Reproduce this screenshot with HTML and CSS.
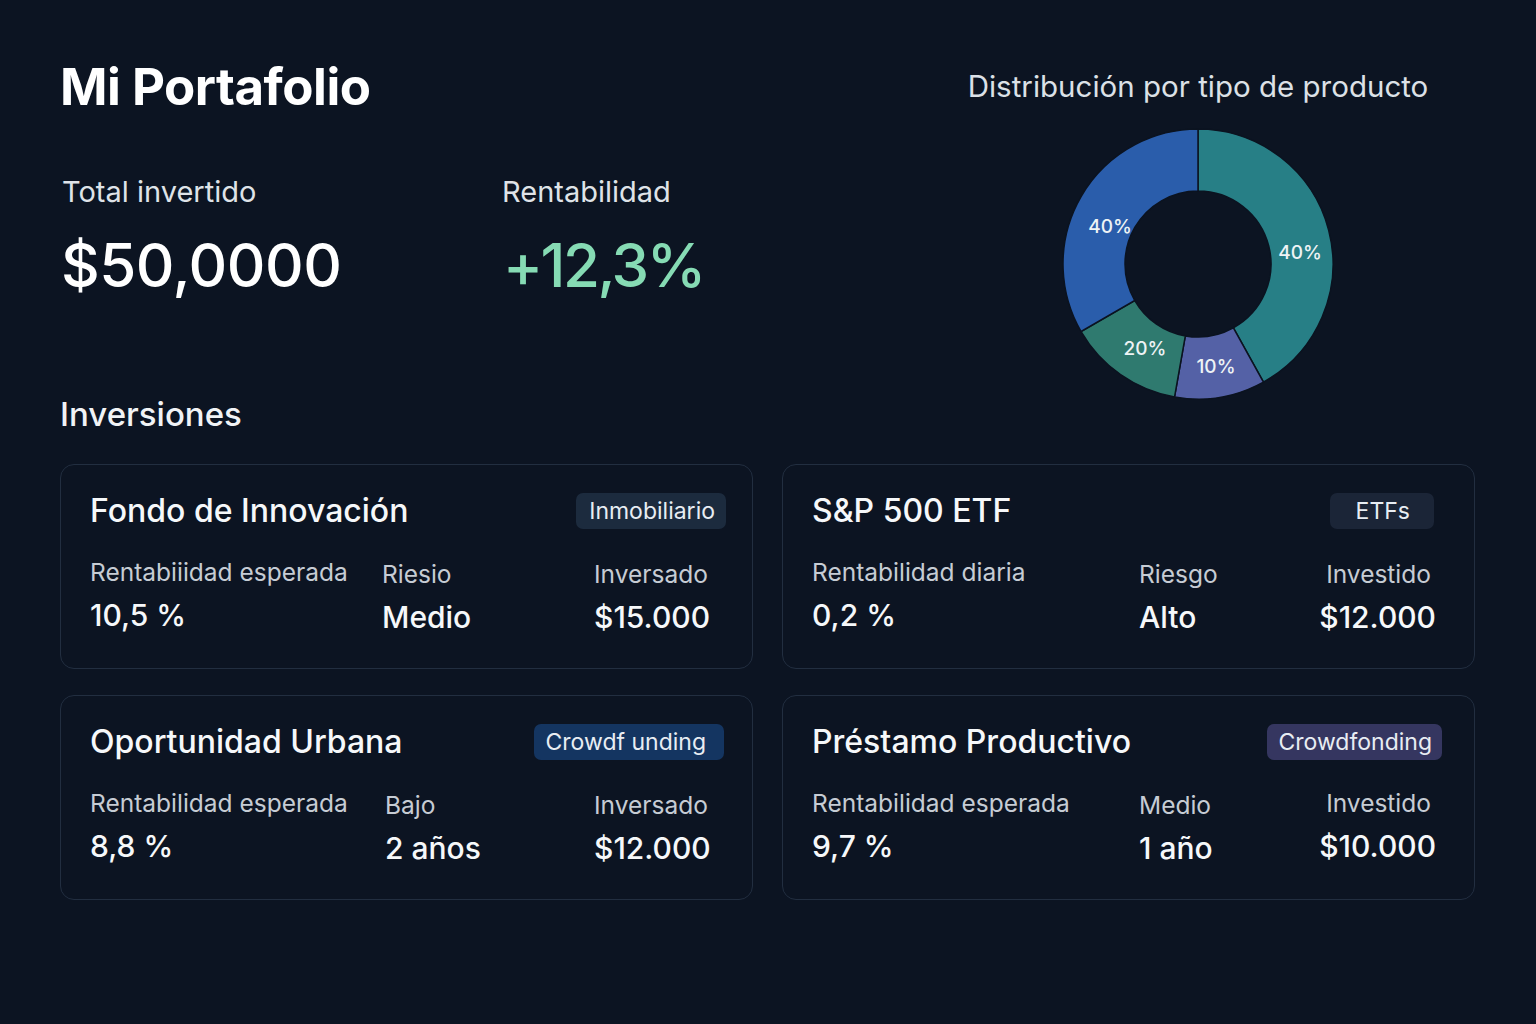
FILE: index.html
```html
<!DOCTYPE html>
<html lang="es">
<head>
<meta charset="utf-8">
<title>Mi Portafolio</title>
<link rel="stylesheet" href="styles.css">
</head>
<body>
<main class="page">
  <section class="top">
    <div class="summary">
      <h1 class="title">Mi Portafolio</h1>
      <div class="stats">
        <div class="stat stat--total">
          <div class="stat-label">Total invertido</div>
          <div class="stat-value">$50,0000</div>
        </div>
        <div class="stat">
          <div class="stat-label">Rentabilidad</div>
          <div class="stat-value stat-value--green">+12,3%</div>
        </div>
      </div>
    </div>
    <div class="chart">
      <h2 class="chart-title">Distribución por tipo de producto</h2>
      <svg class="donut" width="272" height="272" viewBox="0 0 272 272">
        <g stroke="#0b1320" stroke-width="1.5">
          <path fill="#277f86" d="M136 1 A135 135 0 0 1 201.45 254.07 L171.39 199.85 A73 73 0 0 0 136 63 Z"/>
          <path fill="#5461a6" d="M201.45 254.07 A135 135 0 0 1 112.56 268.95 L123.32 207.89 A73 73 0 0 0 171.39 199.85 Z"/>
          <path fill="#2f7a6f" d="M112.56 268.95 A135 135 0 0 1 19.09 203.5 L72.78 172.5 A73 73 0 0 0 123.32 207.89 Z"/>
          <path fill="#2a5dab" d="M19.09 203.5 A135 135 0 0 1 136 1 L136 63 A73 73 0 0 0 72.78 172.5 Z"/>
        </g>
        <g class="donut-labels" text-anchor="middle" dominant-baseline="central">
          <text x="238" y="124">40%</text>
          <text x="48" y="98">40%</text>
          <text x="83" y="220">20%</text>
          <text x="154" y="238">10%</text>
        </g>
      </svg>
    </div>
  </section>

  <h2 class="section-title">Inversiones</h2>

  <section class="cards">
    <article class="card card--left">
      <header class="card-head">
        <h3 class="card-title">Fondo de Innovación</h3>
        <span class="badge badge--slate">Inmobiliario</span>
      </header>
      <div class="metrics">
        <div class="metric"><div class="m-label">Rentabiiidad esperada</div><div class="m-value">10,5 %</div></div>
        <div class="metric metric--low"><div class="m-label">Riesio</div><div class="m-value">Medio</div></div>
        <div class="metric metric--low"><div class="m-label">Inversado</div><div class="m-value">$15.000</div></div>
      </div>
    </article>

    <article class="card card--right">
      <header class="card-head">
        <h3 class="card-title">S&amp;P 500 ETF</h3>
        <span class="badge badge--navy">ETFs</span>
      </header>
      <div class="metrics">
        <div class="metric"><div class="m-label">Rentabilidad diaria</div><div class="m-value">0,2 %</div></div>
        <div class="metric metric--low"><div class="m-label">Riesgo</div><div class="m-value">Alto</div></div>
        <div class="metric metric--end metric--low"><div class="m-label">Investido</div><div class="m-value">$12.000</div></div>
      </div>
    </article>

    <article class="card card--left card--shift">
      <header class="card-head">
        <h3 class="card-title">Oportunidad Urbana</h3>
        <span class="badge badge--blue">Crowdf unding</span>
      </header>
      <div class="metrics">
        <div class="metric"><div class="m-label">Rentabilidad esperada</div><div class="m-value">8,8 %</div></div>
        <div class="metric metric--low"><div class="m-label">Bajo</div><div class="m-value">2 años</div></div>
        <div class="metric metric--low"><div class="m-label">Inversado</div><div class="m-value">$12.000</div></div>
      </div>
    </article>

    <article class="card card--right">
      <header class="card-head">
        <h3 class="card-title">Préstamo Productivo</h3>
        <span class="badge badge--purple">Crowdfonding</span>
      </header>
      <div class="metrics">
        <div class="metric"><div class="m-label">Rentabilidad esperada</div><div class="m-value">9,7 %</div></div>
        <div class="metric metric--low"><div class="m-label">Medio</div><div class="m-value">1 año</div></div>
        <div class="metric metric--end"><div class="m-label">Investido</div><div class="m-value">$10.000</div></div>
      </div>
    </article>
  </section>
</main>
</body>
</html>
```

FILE: styles.css
```css
* { box-sizing: border-box; }

html, body {
  margin: 0;
  background: #0c1422;
}

body {
  font-family: Inter, "Noto Sans", "Liberation Sans", sans-serif;
  color: #f2f4f7;
  width: 1536px;
  height: 1024px;
  overflow: hidden;
}

.page {
  padding: 52px 61px 0 60px;
}

.top {
  display: flex;
  justify-content: space-between;
  align-items: flex-start;
  height: 340px;
}

.title {
  margin: 0;
  font-size: 51px;
  line-height: 70px;
  font-weight: 700;
  letter-spacing: -0.5px;
  color: #ffffff;
}

.stats {
  display: flex;
  margin-top: 52px;
}

.stat--total {
  width: 440px;
}

.stat-label {
  font-size: 29px;
  line-height: 36px;
  font-weight: 400;
  color: #dfe3e8;
  padding-left: 2px;
}

.stat-value {
  margin-top: 21px;
  font-size: 60px;
  line-height: 68px;
  font-weight: 500;
  letter-spacing: -0.5px;
  color: #ffffff;
  padding-left: 1px;
}

.stat-value--green {
  color: #86dbb4;
  padding-left: 3px;
  letter-spacing: -2.5px;
}

.chart {
  width: 480px;
  margin-right: 37px;
  display: flex;
  flex-direction: column;
  align-items: center;
  padding-top: 16px;
}

.chart-title {
  margin: 0;
  font-size: 29.5px;
  line-height: 36px;
  font-weight: 400;
  color: #dce1e7;
  white-space: nowrap;
}

.donut {
  display: block;
  margin-top: 24px;
}

.donut-labels {
  font-family: Inter, "Noto Sans", sans-serif;
  font-size: 19px;
  font-weight: 500;
  fill: #eef3f5;
}

.section-title {
  margin: 0;
  font-size: 33px;
  line-height: 44px;
  font-weight: 500;
  color: #f1f3f6;
}

.cards {
  margin-top: 28px;
  display: grid;
  grid-template-columns: 693px 693px;
  column-gap: 29px;
  row-gap: 26px;
}

.card {
  height: 205px;
  border: 1.5px solid #222e40;
  border-radius: 14px;
  background: #0c1422;
  padding: 24px 28px 0 29px;
}

.card-head {
  display: flex;
  justify-content: space-between;
  align-items: center;
  height: 44px;
}

.card-title {
  margin: 0;
  font-size: 32px;
  line-height: 44px;
  font-weight: 500;
  color: #f6f8fa;
}

.badge {
  font-size: 23px;
  line-height: 36px;
  padding: 0 11px 0 13px;
  border-radius: 7px;
  color: #e8edf3;
  font-weight: 400;
}

.badge--slate { background: #1c2b3e; margin-right: -2px; }
.badge--navy { background: #1b2537; padding: 0 24px 0 26px; margin-right: 12px; }
.badge--blue { background: #143561; padding: 0 18px 0 12px; }
.badge--purple { background: #353660; padding: 0 10px 0 11px; margin-right: 4px; }

.metrics {
  display: grid;
  margin-top: 22px;
}

.card--left .metrics {
  grid-template-columns: 292px 212px 1fr;
}

.card--shift .metrics {
  grid-template-columns: 295px 209px 1fr;
}

.card--right .metrics {
  grid-template-columns: 327px 1fr auto;
  padding-right: 10px;
}

.m-label {
  font-size: 24.5px;
  line-height: 34px;
  color: #c6ccd4;
  white-space: nowrap;
}

.m-value {
  margin-top: 8px;
  font-size: 30px;
  line-height: 36px;
  font-weight: 500;
  color: #f6f8fa;
  white-space: nowrap;
}

.metric--low .m-label,
.metric--low .m-value {
  position: relative;
  top: 2px;
}

.metric--end {
  text-align: right;
}

.metric--end .m-label {
  padding-right: 5px;
}
```
